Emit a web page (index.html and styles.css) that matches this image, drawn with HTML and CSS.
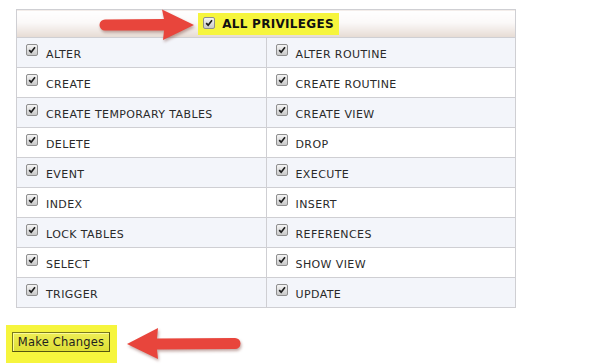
FILE: index.html
```html
<!DOCTYPE html>
<html>
<head>
<meta charset="utf-8">
<link rel="stylesheet" href="styles.css">
</head>
<body>
<div class="page">
  <table class="priv">
    <thead>
      <tr>
        <th colspan="2" class="head">
          <span class="hl"><span class="cb"><svg viewBox="0 0 12 12"><path d="M2.6 6.2 L5 8.6 L9.6 2.8" /></svg></span>ALL PRIVILEGES</span>
        </th>
      </tr>
    </thead>
    <tbody>
      <tr class="odd"><td><span class="cb"><svg viewBox="0 0 12 12"><path d="M2.6 6.2 L5 8.6 L9.6 2.8" /></svg></span>ALTER</td><td><span class="cb"><svg viewBox="0 0 12 12"><path d="M2.6 6.2 L5 8.6 L9.6 2.8" /></svg></span>ALTER ROUTINE</td></tr>
      <tr><td><span class="cb"><svg viewBox="0 0 12 12"><path d="M2.6 6.2 L5 8.6 L9.6 2.8" /></svg></span>CREATE</td><td><span class="cb"><svg viewBox="0 0 12 12"><path d="M2.6 6.2 L5 8.6 L9.6 2.8" /></svg></span>CREATE ROUTINE</td></tr>
      <tr class="odd"><td><span class="cb"><svg viewBox="0 0 12 12"><path d="M2.6 6.2 L5 8.6 L9.6 2.8" /></svg></span>CREATE TEMPORARY TABLES</td><td><span class="cb"><svg viewBox="0 0 12 12"><path d="M2.6 6.2 L5 8.6 L9.6 2.8" /></svg></span>CREATE VIEW</td></tr>
      <tr><td><span class="cb"><svg viewBox="0 0 12 12"><path d="M2.6 6.2 L5 8.6 L9.6 2.8" /></svg></span>DELETE</td><td><span class="cb"><svg viewBox="0 0 12 12"><path d="M2.6 6.2 L5 8.6 L9.6 2.8" /></svg></span>DROP</td></tr>
      <tr class="odd"><td><span class="cb"><svg viewBox="0 0 12 12"><path d="M2.6 6.2 L5 8.6 L9.6 2.8" /></svg></span>EVENT</td><td><span class="cb"><svg viewBox="0 0 12 12"><path d="M2.6 6.2 L5 8.6 L9.6 2.8" /></svg></span>EXECUTE</td></tr>
      <tr><td><span class="cb"><svg viewBox="0 0 12 12"><path d="M2.6 6.2 L5 8.6 L9.6 2.8" /></svg></span>INDEX</td><td><span class="cb"><svg viewBox="0 0 12 12"><path d="M2.6 6.2 L5 8.6 L9.6 2.8" /></svg></span>INSERT</td></tr>
      <tr class="odd"><td><span class="cb"><svg viewBox="0 0 12 12"><path d="M2.6 6.2 L5 8.6 L9.6 2.8" /></svg></span>LOCK TABLES</td><td><span class="cb"><svg viewBox="0 0 12 12"><path d="M2.6 6.2 L5 8.6 L9.6 2.8" /></svg></span>REFERENCES</td></tr>
      <tr><td><span class="cb"><svg viewBox="0 0 12 12"><path d="M2.6 6.2 L5 8.6 L9.6 2.8" /></svg></span>SELECT</td><td><span class="cb"><svg viewBox="0 0 12 12"><path d="M2.6 6.2 L5 8.6 L9.6 2.8" /></svg></span>SHOW VIEW</td></tr>
      <tr class="odd"><td><span class="cb"><svg viewBox="0 0 12 12"><path d="M2.6 6.2 L5 8.6 L9.6 2.8" /></svg></span>TRIGGER</td><td><span class="cb"><svg viewBox="0 0 12 12"><path d="M2.6 6.2 L5 8.6 L9.6 2.8" /></svg></span>UPDATE</td></tr>
    </tbody>
  </table>
  <div class="actions">
    <div class="btn-hl"><button class="btn" type="button">Make Changes</button></div>
  </div>
  <svg class="arrows" width="590" height="364" viewBox="0 0 590 364">
    <path d="M105,19.5 L164,19 L162,9.5 L194,25 L163,40 L164,30.5 L105,30.5 A5.5,5.5 0 0 1 105,19.5 Z" />
    <path d="M127,344 L158,328 L157,338.5 L235,338 A5.5,5.5 0 0 1 235,349 L157,349.5 L158,359 Z" />
  </svg>
</div>
</body>
</html>
```

FILE: styles.css
```css
html, body {
  margin: 0;
  padding: 0;
  background: #ffffff;
}

.page {
  position: relative;
  width: 590px;
  height: 364px;
  overflow: hidden;
  font-family: "DejaVu Sans", Verdana, sans-serif;
  color: #2a2a2a;
}

.priv {
  margin: 9px 0 0 16px;
  width: 500px;
  border-collapse: collapse;
  table-layout: fixed;
}

.priv td,
.priv th {
  border: 1px solid #cfcfd3;
  padding: 0;
}

.head {
  height: 27px;
  background: linear-gradient(#ffffff 0%, #fbf9f8 45%, #e6dbd3 100%);
  text-align: center;
  vertical-align: middle;
}

.hl {
  display: inline-flex;
  align-items: center;
  height: 22px;
  padding: 0 5px 0 5px;
  background: #f6f53d;
  font-size: 12px;
  font-weight: bold;
  letter-spacing: 0.3px;
  color: #111;
  margin-left: 5px;
}

.priv td {
  height: 26px;
  width: 249px;
  font-size: 11px;
  letter-spacing: 0.4px;
  vertical-align: middle;
  padding: 3px 0 0 9px;
  white-space: nowrap;
}

.priv tr.odd td {
  background: #f3f5fa;
}

.cb {
  display: inline-block;
  box-sizing: border-box;
  width: 12px;
  height: 12px;
  border: 1px solid #8e8e8e;
  border-radius: 2px;
  background: linear-gradient(#f4f4f4, #c9c9c9);
  margin-right: 8px;
  vertical-align: -1px;
  position: relative;
  top: -3px;
}

.cb svg {
  display: block;
  width: 10px;
  height: 10px;
}

.cb svg path {
  fill: none;
  stroke: #1c1c1c;
  stroke-width: 2;
}

.hl .cb {
  margin-right: 7px;
  top: -1px;
}

.actions {
  display: flex;
  padding: 17px 0 0 6px;
}

.btn-hl {
  background: #f6f53d;
  padding: 7px 7px 11px 6px;
}

.btn {
  display: block;
  width: 98px;
  height: 20px;
  padding: 0;
  border: 1px solid #7a7a1e;
  border-right-color: #55550f;
  border-bottom-color: #55550f;
  background: linear-gradient(#eeee55, #dede35);
  box-shadow: inset 1px 1px 0 #fbfb9a;
  font-family: "DejaVu Sans", Verdana, sans-serif;
  font-size: 11.5px;
  letter-spacing: 0.2px;
  color: #1e1e1e;
}

.arrows {
  position: absolute;
  left: 0;
  top: 0;
  pointer-events: none;
}

.arrows path {
  fill: #e8453c;
  filter: drop-shadow(1px 2px 1.5px rgba(120, 60, 50, 0.45));
}
```
